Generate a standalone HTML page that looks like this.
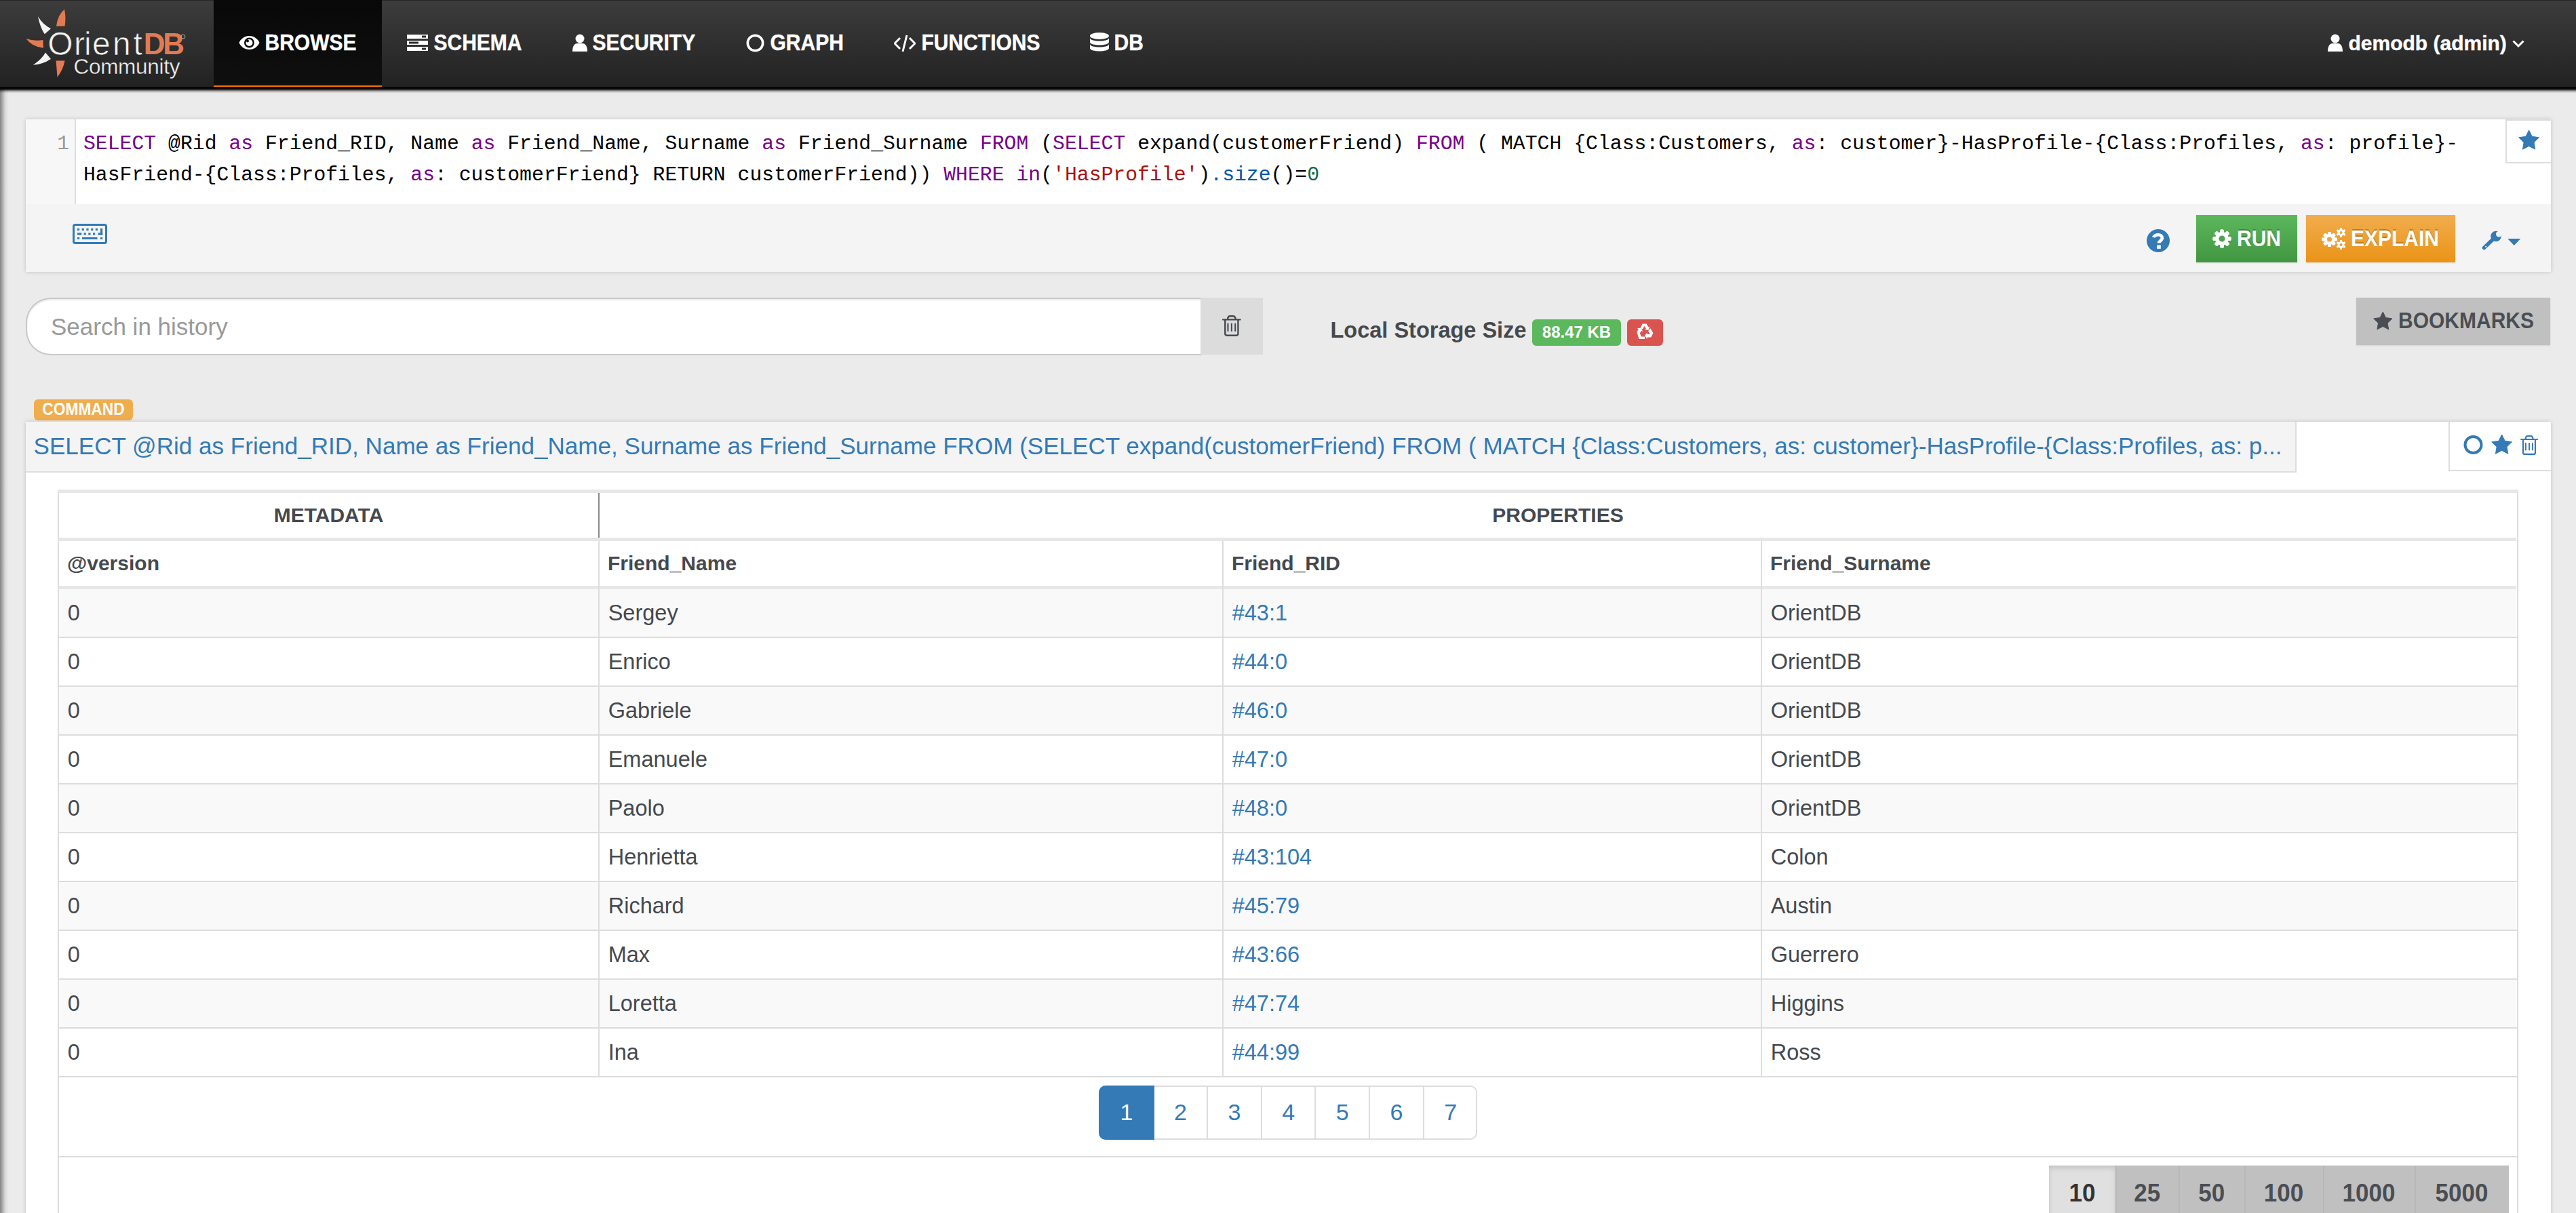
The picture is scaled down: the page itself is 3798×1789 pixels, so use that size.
<!DOCTYPE html>
<html><head><meta charset="utf-8">
<style>
*{box-sizing:border-box;margin:0;padding:0}
html,body{width:3798px;height:1789px;overflow:hidden}
body{position:relative;background:#ebebeb;font-family:"Liberation Sans",sans-serif;color:#45494e}
.a{position:absolute}
.nav{left:0;top:0;width:3798px;height:128px;background:linear-gradient(to bottom,#3c3c3c 0,#222 100%);border-top:1px solid #262626}
.navsh{left:0;top:128px;width:3798px;height:10px;background:linear-gradient(to bottom,rgba(0,0,0,.98) 0,rgba(0,0,0,.96) 33%,rgba(0,0,0,.48) 55%,rgba(0,0,0,.11) 78%,rgba(0,0,0,0) 100%)}
.leftsh{left:0;top:128px;width:14px;height:1661px;background:linear-gradient(to right,#858585 0,#9a9a9a 2px,#dcdcdc 8px,#ebebeb 13px)}
.ni{top:0;height:128px;line-height:128px;font-size:30px;font-weight:bold;color:#fff;white-space:nowrap;transform:scaleY(1.09);transform-origin:0 74px;-webkit-text-stroke:0.4px #fff}
.ico{position:absolute}
.panel{background:#fff;box-shadow:0 0 6px rgba(0,0,0,.18)}
.cm{font-family:"Liberation Mono",monospace;font-size:29.78px;color:#000;white-space:pre;line-height:45.8px}
.kw{color:#770088}.str{color:#aa1111}.num{color:#116644}.prop{color:#0055aa}
.btn{text-shadow:0 -1.5px 0 rgba(0,0,0,.25);color:#fff;font-weight:bold;font-size:30px;white-space:nowrap;transform:scaleY(1.08);transform-origin:0 46px}
.row{left:87px;width:3623px;height:70px}
.cell{position:absolute;top:0;height:70px;line-height:70px;font-size:32.5px;white-space:nowrap;padding-left:12.7px}
.vl{position:absolute;width:2px;background:#dddddd}
.hl{position:absolute;height:2px;background:#dddddd}
.th{font-weight:bold;font-size:30px}
.pg{position:absolute;top:1601px;height:80px;line-height:78px;text-align:center;font-size:33px;color:#337ab7;border:2px solid #ddd;background:#fff}
.ps{position:absolute;top:1719px;height:80px;line-height:79px;text-align:center;font-size:35px;font-weight:bold;color:#4a4e53;background:#c0c0c0}
</style></head>
<body>
<!-- NAVBAR -->
<div class="a nav"></div>
<div class="a leftsh"></div>
<div class="a navsh"></div>
<div class="a" style="left:315px;top:0;width:248px;height:128px;background:linear-gradient(to bottom,#080808,#0f0f0f)"></div>
<div class="a" style="left:315px;top:125.7px;width:248px;height:2.4px;background:#ff6d00"></div>

<!-- logo -->
<svg class="a" style="left:0;top:0" width="320" height="128" viewBox="0 0 320 128">
  <path d="M83 38.5 Q85 22 95 13.7 Q97.5 26 95.6 38.5Z" fill="#e27b53"/>
  <path d="M56 24.2 Q59 40 65.8 50.3 L75 42.2 Q63 36 56 24.2Z" fill="#f4f4f4"/>
  <path d="M38.5 57 Q50 61 63.4 59 L64 70.8 Q47 69 38.5 57Z" fill="#e27b53"/>
  <path d="M49 95.7 Q62 87 67 77.6 L75 87 Q63 95 49 95.7Z" fill="#f4f4f4"/>
  <path d="M82.6 89.4 L95.6 89.4 Q93 103 84.5 113.7 Q83.5 101 82.6 89.4Z" fill="#e27b53"/>
  <text x="70.3 109 124 136 166 196.5" y="81" font-family="Liberation Sans" font-size="48" fill="#f2f2f2" stroke="#2e2e2e" stroke-width="0.7">Orient</text>
  <text x="211.7 240.2" y="80" font-family="Liberation Sans" font-size="44" font-weight="bold" fill="#e27b53">DB</text>
  <circle cx="270" cy="54" r="3" fill="none" stroke="#aaa" stroke-width="1"/>
  <text x="108.5" y="109.3" font-family="Liberation Sans" font-size="31.5" fill="#f0f0f0" stroke="#2a2a2a" stroke-width="0.4" letter-spacing="-0.3">Community</text>
</svg>
<!-- nav items -->
<svg class="a" style="left:352px;top:52px" width="31" height="22" viewBox="0 0 31 22"><path d="M15.5 1C8 1 2.5 6 0.5 11 2.5 16 8 21 15.5 21S28.5 16 30.5 11C28.5 6 23 1 15.5 1Z" fill="#fff"/><circle cx="15.5" cy="11" r="7.5" fill="#0b0b0b"/><circle cx="15.5" cy="11" r="5" fill="#fff"/><circle cx="13" cy="8.5" r="2" fill="#0b0b0b"/></svg>
<div class="a ni" style="left:390.5px">BROWSE</div>
<svg class="a" style="left:600px;top:51px" width="31" height="24" viewBox="0 0 31 24"><rect x="0" y="0" width="31" height="6" fill="#fff"/><rect x="0" y="9" width="31" height="6" fill="#fff"/><rect x="0" y="18" width="31" height="6" fill="#fff"/><rect x="22" y="1.5" width="6" height="3" fill="#2c2c2c"/><rect x="3" y="10.5" width="14" height="3" fill="#2c2c2c"/><rect x="22" y="19.5" width="6" height="3" fill="#2c2c2c"/></svg>
<div class="a ni" style="left:639.5px">SCHEMA</div>
<svg class="a" style="left:844px;top:50px" width="22" height="26" viewBox="0 0 22 26"><circle cx="11" cy="7" r="6.5" fill="#fff"/><path d="M0 26 C0 18 3 14 7 14 L15 14 C19 14 22 18 22 26Z" fill="#fff"/></svg>
<div class="a ni" style="left:873.5px">SECURITY</div>
<svg class="a" style="left:1100px;top:49.5px" width="27" height="27" viewBox="0 0 27 27"><circle cx="13.5" cy="13.5" r="11.2" fill="none" stroke="#fff" stroke-width="3.6"/></svg>
<div class="a ni" style="left:1135.5px">GRAPH</div>
<svg class="a" style="left:1318px;top:51px" width="32" height="26" viewBox="0 0 32 26"><path d="M9 5 L1 13 L9 21" fill="none" stroke="#fff" stroke-width="3"/><path d="M23 5 L31 13 L23 21" fill="none" stroke="#fff" stroke-width="3"/><path d="M19 1 L13 25" fill="none" stroke="#fff" stroke-width="3"/></svg>
<div class="a ni" style="left:1358.5px">FUNCTIONS</div>
<svg class="a" style="left:1607px;top:48px" width="28" height="31" viewBox="0 0 28 31"><ellipse cx="14" cy="5" rx="14" ry="5" fill="#fff"/><path d="M0 8 C0 14 28 14 28 8 L28 14 C28 20 0 20 0 14Z" fill="#fff"/><path d="M0 17 C0 23 28 23 28 17 L28 23 C28 29 0 29 0 23Z" fill="#fff"/></svg>
<div class="a ni" style="left:1642.5px">DB</div>
<svg class="a" style="left:3432px;top:50px" width="22" height="26" viewBox="0 0 22 26"><circle cx="11" cy="7" r="6.5" fill="#fff"/><path d="M0 26 C0 18 3 14 7 14 L15 14 C19 14 22 18 22 26Z" fill="#fff"/></svg>
<div class="a ni" style="left:3462.5px;transform:none">demodb (admin)</div>
<svg class="a" style="left:3704px;top:59px" width="18" height="11" viewBox="0 0 18 11"><path d="M1.5 1.5 L9 9 L16.5 1.5" fill="none" stroke="#fff" stroke-width="3"/></svg>

<!-- EDITOR PANEL -->
<div class="a panel" style="left:38px;top:176px;width:3723px;height:224.8px;background:#f4f4f4"></div>
<div class="a" style="left:38px;top:176px;width:3723px;height:125px;background:#fff"></div>
<div class="a" style="left:38px;top:176px;width:74px;height:125px;background:#f7f7f7;border-right:2px solid #ddd"></div>
<div class="a cm" style="left:38px;top:189.8px;width:64px;text-align:right;color:#999">1</div>
<div class="a cm" style="left:123px;top:189.8px"><span class="kw">SELECT</span> @Rid <span class="kw">as</span> Friend_RID, Name <span class="kw">as</span> Friend_Name, Surname <span class="kw">as</span> Friend_Surname <span class="kw">FROM</span> (<span class="kw">SELECT</span> expand(customerFriend) <span class="kw">FROM</span> ( MATCH {Class:Customers, <span class="kw">as</span>: customer}-HasProfile-{Class:Profiles, <span class="kw">as</span>: profile}-
HasFriend-{Class:Profiles, <span class="kw">as</span>: customerFriend} RETURN customerFriend)) <span class="kw">WHERE</span> <span class="kw">in</span>(<span class="str">'HasProfile'</span>)<span class="prop">.size</span>()=<span class="num">0</span></div>
<div class="a" style="left:3694px;top:176px;width:67px;height:65px;background:#fff;border-left:2px solid #ddd;border-bottom:2px solid #ddd;border-top:2px solid #ddd"></div>
<svg class="a" style="left:3712.90px;top:192.2px" width="31.2" height="31.2" viewBox="0 0 31.20 31.20"><path d="M15.60 0.00 L20.18 9.29 L30.44 10.78 L23.02 18.01 L24.77 28.22 L15.60 23.40 L6.43 28.22 L8.18 18.01 L0.76 10.78 L11.02 9.29Z" fill="#337ab7" stroke="#337ab7" stroke-width="1" stroke-linejoin="round"/></svg>

<!-- toolbar -->
<svg class="a" style="left:107px;top:330px" width="51" height="30" viewBox="0 0 51 30"><rect x="1.5" y="1.5" width="48" height="27" rx="2.5" fill="none" stroke="#337ab7" stroke-width="3"/><g fill="#337ab7"><rect x="7" y="6.8" width="3.2" height="3.2"/><rect x="13.7" y="6.8" width="3.2" height="3.2"/><rect x="20.4" y="6.8" width="3.2" height="3.2"/><rect x="27.1" y="6.8" width="3.2" height="3.2"/><rect x="33.8" y="6.8" width="3.2" height="3.2"/><rect x="41" y="6.8" width="3.2" height="9.8"/><rect x="37.5" y="13.4" width="6.7" height="3.2"/><rect x="7" y="13.4" width="6.3" height="3.2"/><rect x="16.6" y="13.4" width="3.2" height="3.2"/><rect x="23.3" y="13.4" width="3.2" height="3.2"/><rect x="30" y="13.4" width="3.2" height="3.2"/><rect x="7" y="20" width="3.2" height="3"/><rect x="14" y="20" width="22.5" height="3"/><rect x="41" y="20" width="3.2" height="3"/></g></svg>
<svg class="a" style="left:3165px;top:337.7px" width="34" height="34" viewBox="0 0 35 35"><circle cx="17.5" cy="17.5" r="17.5" fill="#337ab7"/><path d="M10.5 12.5 C12 7.5 23.5 6.5 23.5 13.5 C23.5 17.5 18.5 17.5 18.5 21" fill="none" stroke="#fff" stroke-width="4.8"/><rect x="15.6" y="24.2" width="5.8" height="5.5" fill="#fff"/></svg>
<div class="a" style="left:3238px;top:317px;width:149px;height:70px;background:linear-gradient(to bottom,#5cb85c,#419641);box-shadow:0 1px 2px rgba(0,0,0,.1)"></div>
<svg class="a" style="left:3262px;top:338px" width="28" height="28" viewBox="0 0 28 28"><g fill="#fff"><rect x="11.2" y="0.5" width="5.6" height="27" rx="1.5" transform="rotate(0 14 14)"/><rect x="11.2" y="0.5" width="5.6" height="27" rx="1.5" transform="rotate(45 14 14)"/><rect x="11.2" y="0.5" width="5.6" height="27" rx="1.5" transform="rotate(90 14 14)"/><rect x="11.2" y="0.5" width="5.6" height="27" rx="1.5" transform="rotate(135 14 14)"/><rect x="11.2" y="0.5" width="5.6" height="27" rx="1.5" transform="rotate(180 14 14)"/><rect x="11.2" y="0.5" width="5.6" height="27" rx="1.5" transform="rotate(225 14 14)"/><rect x="11.2" y="0.5" width="5.6" height="27" rx="1.5" transform="rotate(270 14 14)"/><rect x="11.2" y="0.5" width="5.6" height="27" rx="1.5" transform="rotate(315 14 14)"/><circle cx="14" cy="14" r="10"/></g><circle cx="14" cy="14" r="4.6" fill="#4fa54f"/></svg>
<div class="a btn" style="left:3298px;top:317px;line-height:72px">RUN</div>
<div class="a" style="left:3400px;top:317px;width:220px;height:70px;background:linear-gradient(to bottom,#f0ad4e,#eb9316);box-shadow:0 1px 2px rgba(0,0,0,.1)"></div>
<svg class="a" style="left:3423px;top:336px" width="36" height="32" viewBox="0 0 36 32"><g fill="#fff"><rect x="9" y="6" width="5" height="22" rx="1.2" transform="rotate(0 11.5 17)"/><rect x="9" y="6" width="5" height="22" rx="1.2" transform="rotate(45 11.5 17)"/><rect x="9" y="6" width="5" height="22" rx="1.2" transform="rotate(90 11.5 17)"/><rect x="9" y="6" width="5" height="22" rx="1.2" transform="rotate(135 11.5 17)"/><rect x="9" y="6" width="5" height="22" rx="1.2" transform="rotate(180 11.5 17)"/><rect x="9" y="6" width="5" height="22" rx="1.2" transform="rotate(225 11.5 17)"/><rect x="9" y="6" width="5" height="22" rx="1.2" transform="rotate(270 11.5 17)"/><rect x="9" y="6" width="5" height="22" rx="1.2" transform="rotate(315 11.5 17)"/><circle cx="11.5" cy="17" r="8"/><rect x="27" y="0" width="3" height="14" rx="1" transform="rotate(0 28.5 7)"/><rect x="27" y="0" width="3" height="14" rx="1" transform="rotate(60 28.5 7)"/><rect x="27" y="0" width="3" height="14" rx="1" transform="rotate(120 28.5 7)"/><rect x="27" y="0" width="3" height="14" rx="1" transform="rotate(180 28.5 7)"/><rect x="27" y="0" width="3" height="14" rx="1" transform="rotate(240 28.5 7)"/><rect x="27" y="0" width="3" height="14" rx="1" transform="rotate(300 28.5 7)"/><circle cx="28.5" cy="7" r="5"/><rect x="27" y="18" width="3" height="14" rx="1" transform="rotate(0 28.5 25)"/><rect x="27" y="18" width="3" height="14" rx="1" transform="rotate(60 28.5 25)"/><rect x="27" y="18" width="3" height="14" rx="1" transform="rotate(120 28.5 25)"/><rect x="27" y="18" width="3" height="14" rx="1" transform="rotate(180 28.5 25)"/><rect x="27" y="18" width="3" height="14" rx="1" transform="rotate(240 28.5 25)"/><rect x="27" y="18" width="3" height="14" rx="1" transform="rotate(300 28.5 25)"/><circle cx="28.5" cy="25" r="5"/></g><circle cx="11.5" cy="17" r="3.5" fill="#eea03c"/><circle cx="28.5" cy="7" r="2" fill="#efa43f"/><circle cx="28.5" cy="25" r="2" fill="#ec9a2c"/></svg>
<div class="a btn" style="left:3466px;top:317px;line-height:72px">EXPLAIN</div>
<svg class="a" style="left:3658px;top:338px" width="32" height="32" viewBox="0 0 32 32"><path d="M4.5 27.5 L17 15.5" stroke="#337ab7" stroke-width="5.6" stroke-linecap="round"/><circle cx="22" cy="10.5" r="7.8" fill="#337ab7"/><circle cx="26.3" cy="7.2" r="4.3" fill="#f4f4f4"/><circle cx="7.2" cy="25.8" r="1.1" fill="#f4f4f4"/></svg>
<svg class="a" style="left:3696.5px;top:352px" width="19.5" height="10" viewBox="0 0 19 10"><path d="M0 0 L19 0 L9.5 10Z" fill="#337ab7"/></svg>

<!-- SEARCH -->
<div class="a" style="left:38px;top:439px;width:1734px;height:84.5px;background:#fff;border:2px solid #c8c8c8;border-right:none;border-radius:37px 0 0 37px;box-shadow:inset 0 2px 2px rgba(0,0,0,.08)"></div>
<div class="a" style="left:75px;top:440px;height:84px;line-height:84px;font-size:35px;color:#999">Search in history</div>
<div class="a" style="left:1770px;top:439px;width:92px;height:84px;background:#dcdcdc"></div>
<svg class="a" style="left:1802px;top:464.5px" width="27.7" height="31" viewBox="0 0 26 29"><path d="M7.5 5.5 Q7.8 1.1 11 1.1 L15 1.1 Q18.2 1.1 18.5 5.5" stroke="#45494e" stroke-width="2.2" fill="none"/><rect x="0" y="4.9" width="26" height="2.1" rx="1" fill="#45494e"/><path d="M4 6 L4 25.4 Q4 27.9 6.5 27.9 L19.5 27.9 Q22 27.9 22 25.4 L22 6" stroke="#45494e" stroke-width="2.2" fill="none"/><rect x="7" y="11" width="1.9" height="11.3" fill="#45494e"/><rect x="12.05" y="11" width="1.9" height="11.3" fill="#45494e"/><rect x="17.1" y="11" width="1.9" height="11.3" fill="#45494e"/></svg>
<div class="a" style="left:1961.5px;top:451.5px;height:70px;line-height:70px;font-size:32.5px;font-weight:bold;color:#45494e">Local Storage Size</div>
<div class="a" style="left:2259px;top:471px;width:131px;height:39px;background:#5cb85c;border-radius:6px;color:#fff;font-weight:bold;font-size:24px;line-height:37px;text-align:center">88.47 KB</div>
<div class="a" style="left:2399px;top:471px;width:53px;height:39px;background:#d9534f;border-radius:6px"></div>
<svg class="a" style="left:2413px;top:477px" width="25" height="23" viewBox="0 0 25 23"><g fill="#fff"><path d="M8.5 0.5 L14.5 0.5 L17.5 5.5 L19.5 4.3 L17.5 9.8 L12 9.3 L14 8.1 L11.6 4 L8.7 8.6 L5.6 6.7Z"/><path d="M20.3 7.3 L24.5 14.3 L21.2 20.5 L15.5 20.5 L15.5 23 L12 18 L15.5 13.5 L15.5 16 L19.6 16 L17.2 11.2Z"/><path d="M0.3 12.5 L2.8 8.2 L0.6 7 L6.5 6.8 L9.2 12 L7 10.7 L4.8 14.6 L7 19.5 L12 19.5 L12 23 L3.5 23Z"/></g></svg>
<div class="a" style="left:3474px;top:439px;width:286px;height:70px;background:#c0c0c0;box-shadow:0 1px 2px rgba(0,0,0,.1)"></div>
<svg class="a" style="left:3498.90px;top:459.50px" width="28.6" height="28.6" viewBox="0 0 28.60 28.60"><path d="M14.30 0.00 L18.50 8.52 L27.90 9.88 L21.10 16.51 L22.71 25.87 L14.30 21.45 L5.89 25.87 L7.50 16.51 L0.70 9.88 L10.10 8.52Z" fill="#4a4e53" stroke="#4a4e53" stroke-width="1" stroke-linejoin="round"/></svg>
<div class="a" style="left:3536px;top:439px;line-height:70px;font-size:30px;font-weight:bold;color:#4a4e53;transform:scaleY(1.08);transform-origin:0 46px">BOOKMARKS</div>

<!-- COMMAND -->
<div class="a" style="left:50px;top:589px;width:146px;height:31px;background:#f0ad4e;border-radius:6px"></div><div class="a" style="left:50px;top:589px;width:146px;height:31px;color:#fff;font-weight:bold;font-size:22.75px;line-height:31px;text-align:center;transform:scaleY(1.1);transform-origin:0 22px">COMMAND</div>
<div class="a panel" style="left:38px;top:621.5px;width:3723px;height:1200px"></div>
<div class="a" style="left:38px;top:621.5px;width:3348px;height:75.5px;background:#f4f4f4;border-bottom:2px solid #ddd;border-right:2px solid #ddd"></div>
<div class="a" style="left:49.6px;top:621px;height:74px;line-height:74px;font-size:35.07px;color:#337ab7;white-space:nowrap">SELECT @Rid as Friend_RID, Name as Friend_Name, Surname as Friend_Surname FROM (SELECT expand(customerFriend) FROM ( MATCH {Class:Customers, as: customer}-HasProfile-{Class:Profiles, as: p...</div>
<div class="a" style="left:3610px;top:621.5px;width:151px;height:73.5px;border-left:2px solid #ddd;border-bottom:2px solid #ddd"></div>
<svg class="a" style="left:3632px;top:641px" width="30" height="30" viewBox="0 0 30 30"><circle cx="14.5" cy="15" r="12" fill="none" stroke="#337ab7" stroke-width="4"/></svg>
<svg class="a" style="left:3672.50px;top:640.70px" width="31.2" height="31.2" viewBox="0 0 31.20 31.20"><path d="M15.60 0.00 L20.18 9.29 L30.44 10.78 L23.02 18.01 L24.77 28.22 L15.60 23.40 L6.43 28.22 L8.18 18.01 L0.76 10.78 L11.02 9.29Z" fill="#337ab7" stroke="#337ab7" stroke-width="1" stroke-linejoin="round"/></svg>
<svg class="a" style="left:3715.8px;top:641.5px" width="26" height="29" viewBox="0 0 26 29"><path d="M7.5 5.5 Q7.8 1.1 11 1.1 L15 1.1 Q18.2 1.1 18.5 5.5" stroke="#337ab7" stroke-width="2.2" fill="none"/><rect x="0" y="4.9" width="26" height="2.1" rx="1" fill="#337ab7"/><path d="M4 6 L4 25.4 Q4 27.9 6.5 27.9 L19.5 27.9 Q22 27.9 22 25.4 L22 6" stroke="#337ab7" stroke-width="2.2" fill="none"/><rect x="7" y="11" width="1.9" height="11.3" fill="#337ab7"/><rect x="12.05" y="11" width="1.9" height="11.3" fill="#337ab7"/><rect x="17.1" y="11" width="1.9" height="11.3" fill="#337ab7"/></svg>

<!-- TABLE -->
<div class="a" style="left:85px;top:722px;width:3628px;height:1100px;border-left:2px solid #ddd;border-right:2px solid #ddd"></div>
<div class="a" style="left:85px;top:722px;width:3628px;height:5px;background:#e6e7e7"></div>
<div class="a" style="left:87px;top:793px;width:3623px;height:5px;background:#e6e7e7"></div>
<div class="a" style="left:87px;top:864px;width:3623px;height:5px;background:#e6e7e7"></div>
<div class="vl" style="left:882px;top:727px;height:66px;background:#8a8a8a"></div>
<div class="a th" style="left:87px;top:727px;width:795px;height:66px;line-height:66px;text-align:center">METADATA</div>
<div class="a th" style="left:884px;top:727px;width:2826px;height:66px;line-height:66px;text-align:center">PROPERTIES</div>
<div class="a th" style="left:99px;top:798px;height:66px;line-height:66px">@version</div>
<div class="a th" style="left:896px;top:798px;height:66px;line-height:66px">Friend_Name</div>
<div class="a th" style="left:1816px;top:798px;height:66px;line-height:66px">Friend_RID</div>
<div class="a th" style="left:2610px;top:798px;height:66px;line-height:66px">Friend_Surname</div>
<div class="vl" style="left:882px;top:798px;height:790px"></div>
<div class="vl" style="left:1802px;top:798px;height:790px"></div>
<div class="vl" style="left:2596px;top:798px;height:790px"></div>

<div id="rows">
<div class="a row" style="top:869px;background:#f9f9f9"><div class="cell" style="left:0">0</div><div class="cell" style="left:797px">Sergey</div><div class="cell" style="left:1717px;color:#337ab7">#43:1</div><div class="cell" style="left:2511px">OrientDB</div></div>
<div class="hl" style="left:87px;top:939px;width:3624px"></div>
<div class="a row" style="top:941px;background:#fff"><div class="cell" style="left:0">0</div><div class="cell" style="left:797px">Enrico</div><div class="cell" style="left:1717px;color:#337ab7">#44:0</div><div class="cell" style="left:2511px">OrientDB</div></div>
<div class="hl" style="left:87px;top:1011px;width:3624px"></div>
<div class="a row" style="top:1013px;background:#f9f9f9"><div class="cell" style="left:0">0</div><div class="cell" style="left:797px">Gabriele</div><div class="cell" style="left:1717px;color:#337ab7">#46:0</div><div class="cell" style="left:2511px">OrientDB</div></div>
<div class="hl" style="left:87px;top:1083px;width:3624px"></div>
<div class="a row" style="top:1085px;background:#fff"><div class="cell" style="left:0">0</div><div class="cell" style="left:797px">Emanuele</div><div class="cell" style="left:1717px;color:#337ab7">#47:0</div><div class="cell" style="left:2511px">OrientDB</div></div>
<div class="hl" style="left:87px;top:1155px;width:3624px"></div>
<div class="a row" style="top:1157px;background:#f9f9f9"><div class="cell" style="left:0">0</div><div class="cell" style="left:797px">Paolo</div><div class="cell" style="left:1717px;color:#337ab7">#48:0</div><div class="cell" style="left:2511px">OrientDB</div></div>
<div class="hl" style="left:87px;top:1227px;width:3624px"></div>
<div class="a row" style="top:1229px;background:#fff"><div class="cell" style="left:0">0</div><div class="cell" style="left:797px">Henrietta</div><div class="cell" style="left:1717px;color:#337ab7">#43:104</div><div class="cell" style="left:2511px">Colon</div></div>
<div class="hl" style="left:87px;top:1299px;width:3624px"></div>
<div class="a row" style="top:1301px;background:#f9f9f9"><div class="cell" style="left:0">0</div><div class="cell" style="left:797px">Richard</div><div class="cell" style="left:1717px;color:#337ab7">#45:79</div><div class="cell" style="left:2511px">Austin</div></div>
<div class="hl" style="left:87px;top:1371px;width:3624px"></div>
<div class="a row" style="top:1373px;background:#fff"><div class="cell" style="left:0">0</div><div class="cell" style="left:797px">Max</div><div class="cell" style="left:1717px;color:#337ab7">#43:66</div><div class="cell" style="left:2511px">Guerrero</div></div>
<div class="hl" style="left:87px;top:1443px;width:3624px"></div>
<div class="a row" style="top:1445px;background:#f9f9f9"><div class="cell" style="left:0">0</div><div class="cell" style="left:797px">Loretta</div><div class="cell" style="left:1717px;color:#337ab7">#47:74</div><div class="cell" style="left:2511px">Higgins</div></div>
<div class="hl" style="left:87px;top:1515px;width:3624px"></div>
<div class="a row" style="top:1517px;background:#fff"><div class="cell" style="left:0">0</div><div class="cell" style="left:797px">Ina</div><div class="cell" style="left:1717px;color:#337ab7">#44:99</div><div class="cell" style="left:2511px">Ross</div></div>
<div class="hl" style="left:87px;top:1587px;width:3624px"></div>
<div class="vl" style="left:882px;top:798px;height:790px"></div><div class="vl" style="left:1802px;top:798px;height:790px"></div><div class="vl" style="left:2596px;top:798px;height:790px"></div>
<div class="hl" style="left:87px;top:1705px;width:3624px"></div>
<div class="a" style="left:1620px;top:1601px;width:558px;height:80px;border:2px solid #ddd;border-radius:10px;background:#fff"></div>
<div class="a" style="left:1620px;top:1601px;width:82px;height:80px;background:#337ab7;border-radius:10px 0 0 10px"></div>
<div class="vl" style="left:1779px;top:1601px;height:80px"></div>
<div class="vl" style="left:1858.7px;top:1601px;height:80px"></div>
<div class="vl" style="left:1938.4px;top:1601px;height:80px"></div>
<div class="vl" style="left:2018.1px;top:1601px;height:80px"></div>
<div class="vl" style="left:2097.8px;top:1601px;height:80px"></div>
<div class="a" style="left:1621px;top:1599.5px;width:80px;height:80px;line-height:80px;text-align:center;font-size:34px;color:#fff">1</div>
<div class="a" style="left:1700.5px;top:1599.5px;width:80px;height:80px;line-height:80px;text-align:center;font-size:34px;color:#337ab7">2</div>
<div class="a" style="left:1779.9px;top:1599.5px;width:80px;height:80px;line-height:80px;text-align:center;font-size:34px;color:#337ab7">3</div>
<div class="a" style="left:1859.6px;top:1599.5px;width:80px;height:80px;line-height:80px;text-align:center;font-size:34px;color:#337ab7">4</div>
<div class="a" style="left:1939.3px;top:1599.5px;width:80px;height:80px;line-height:80px;text-align:center;font-size:34px;color:#337ab7">5</div>
<div class="a" style="left:2018.9px;top:1599.5px;width:80px;height:80px;line-height:80px;text-align:center;font-size:34px;color:#337ab7">6</div>
<div class="a" style="left:2098.7px;top:1599.5px;width:80px;height:80px;line-height:80px;text-align:center;font-size:34px;color:#337ab7">7</div>
<div class="a" style="left:3021px;top:1719px;width:678px;height:80px;background:#c0c0c0"></div>
<div class="a" style="left:3021px;top:1719px;width:98px;height:80px;background:#e0e0e0;box-shadow:inset 0 4px 7px rgba(0,0,0,.13)"></div>
<div class="ps" style="left:3021px;width:98px;top:1720.4px;background:none;color:#333;transform:scaleY(1.06);transform-origin:0 51px">10</div>
<div class="a" style="left:3119px;top:1719px;width:1.5px;height:80px;background:rgba(0,0,0,.045)"></div>
<div class="ps" style="left:3119px;width:93.40000000000009px;top:1720.4px;background:none;color:#4a4e53;transform:scaleY(1.06);transform-origin:0 51px">25</div>
<div class="a" style="left:3212.4px;top:1719px;width:1.5px;height:80px;background:rgba(0,0,0,.045)"></div>
<div class="ps" style="left:3212.4px;width:96.59999999999991px;top:1720.4px;background:none;color:#4a4e53;transform:scaleY(1.06);transform-origin:0 51px">50</div>
<div class="a" style="left:3309px;top:1719px;width:1.5px;height:80px;background:rgba(0,0,0,.045)"></div>
<div class="ps" style="left:3309px;width:116px;top:1720.4px;background:none;color:#4a4e53;transform:scaleY(1.06);transform-origin:0 51px">100</div>
<div class="a" style="left:3425px;top:1719px;width:1.5px;height:80px;background:rgba(0,0,0,.045)"></div>
<div class="ps" style="left:3425px;width:135px;top:1720.4px;background:none;color:#4a4e53;transform:scaleY(1.06);transform-origin:0 51px">1000</div>
<div class="a" style="left:3560px;top:1719px;width:1.5px;height:80px;background:rgba(0,0,0,.045)"></div>
<div class="ps" style="left:3560px;width:139px;top:1720.4px;background:none;color:#4a4e53;transform:scaleY(1.06);transform-origin:0 51px">5000</div>
</div>
</body></html>
